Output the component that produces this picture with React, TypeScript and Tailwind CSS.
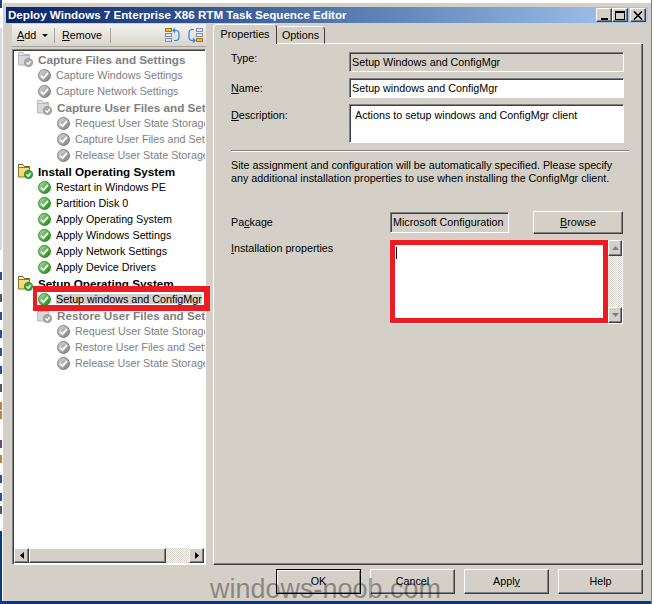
import React from 'react';

const raised = 'border border-t-white border-l-white border-r-[#404040] border-b-[#404040] shadow-[inset_-1px_-1px_0_#808080]';
const sunken = 'border border-t-[#808080] border-l-[#808080] border-r-white border-b-white shadow-[inset_1px_1px_0_#404040]';
const dither = 'bg-[repeating-conic-gradient(#ffffff_0_25%,#d4d0c8_0_50%)] bg-[length:2px_2px]';

const CheckIcon = ({on}: {on: boolean}) => (
    <svg width="13" height="13" viewBox="0 0 13 13" className="shrink-0">
        <defs>
            <linearGradient id={on ? 'check-on' : 'check-off'} x1="0" y1="0" x2="1" y2="1">
                <stop offset="0" stopColor={on ? '#b8e8a8' : '#e0e0e0'}/>
                <stop offset="0.55" stopColor={on ? '#4cb040' : '#a8a8a8'}/>
                <stop offset="1" stopColor={on ? '#1f7a28' : '#787878'}/>
            </linearGradient>
        </defs>
        <circle cx="6.5" cy="6.5" r="6" fill={`url(#${on ? 'check-on' : 'check-off'})`} stroke={on ? '#3a8a3a' : '#808080'} strokeWidth="1"/>
        <path d="M3 6.6 L5.5 9.2 L10 3.8" fill="none" stroke="#ffffff" strokeWidth="1.8"/>
    </svg>
);

const GroupIcon = ({on}: {on: boolean}) => (
    <svg width="15" height="15" viewBox="0 0 15 15" className="shrink-0">
        <path d="M0.5 13 V0.5 H5 L6.5 2.5 H11.5 V6" fill={on ? '#fff8d8' : '#e4e4e4'} stroke={on ? '#6a5a20' : '#b8b8b8'}/>
        <path d="M0.5 13 V3.5 H11.5 V13 Z" fill={on ? '#f3dc78' : '#d8d8d8'} stroke={on ? '#8a7a30' : '#b8b8b8'}/>
        <circle cx="10.5" cy="10.5" r="4.2" fill={on ? '#3fa535' : '#a8a8a8'} stroke={on ? '#1f7a28' : '#909090'} strokeWidth="0.7"/>
        <path d="M8.5 10.5 L10.2 12.2 L12.7 9" fill="none" stroke="#ffffff" strokeWidth="1.3"/>
    </svg>
);

const MoveIcon = ({flip}: {flip?: boolean}) => (
    <svg width="15" height="15" viewBox="0 0 15 15" className={flip ? 'shrink-0 -scale-x-100' : 'shrink-0'}>
        <rect x="0.5" y="0.5" width="6" height="3" fill={flip ? '#dfe6f2' : '#f5b52e'} stroke={flip ? '#7f8fa8' : '#a07a20'}/>
        <rect x="0.5" y="5.5" width="6" height="3" fill="#dfe6f2" stroke="#7f8fa8"/>
        <rect x="0.5" y="10.5" width="6" height="3" fill={flip ? '#f5b52e' : '#dfe6f2'} stroke={flip ? '#a07a20' : '#7f8fa8'}/>
        {flip ? (
            <path d="M9 1.5 H11 Q14 1.5 14 5 V9 Q14 12.5 11 12.5 H8 M10 10.5 L8 12.5 L10 14.5" fill="none" stroke="#2f7fe0" strokeWidth="1.2"/>
        ) : (
            <path d="M8 2.5 H11 Q14 2.5 14 6 V9 Q14 12.5 11 12.5 H9 M10 0.5 L8 2.5 L10 4.5" fill="none" stroke="#2f7fe0" strokeWidth="1.2"/>
        )}
    </svg>
);

const CapButton = ({children}: {children: React.ReactNode}) => (
    <div className={`flex h-[14px] w-4 items-center justify-center bg-[#d4d0c8] ${raised}`}>{children}</div>
);

const DialogButton = ({label, u, def}: {label: string; u?: boolean; def?: boolean}) => (
    <div className={`flex h-[25px] w-[85px] items-center justify-center bg-[#d4d0c8] ${def ? 'border border-black shadow-[inset_1px_1px_0_#ffffff,inset_-1px_-1px_0_#808080]' : raised}`}>
        {u ? <span>Appl<span className="underline">y</span></span> : label}
    </div>
);

type Row = {label: string; pl: string; group?: boolean; on?: boolean; selected?: boolean};

const rows: Row[] = [
    {label: 'Capture Files and Settings', pl: 'pl-1', group: true},
    {label: 'Capture Windows Settings', pl: 'pl-6'},
    {label: 'Capture Network Settings', pl: 'pl-6'},
    {label: 'Capture User Files and Settings', pl: 'pl-[23px]', group: true},
    {label: 'Request User State Storage', pl: 'pl-[43px]'},
    {label: 'Capture User Files and Settings', pl: 'pl-[43px]'},
    {label: 'Release User State Storage', pl: 'pl-[43px]'},
    {label: 'Install Operating System', pl: 'pl-1', group: true, on: true},
    {label: 'Restart in Windows PE', pl: 'pl-6', on: true},
    {label: 'Partition Disk 0', pl: 'pl-6', on: true},
    {label: 'Apply Operating System', pl: 'pl-6', on: true},
    {label: 'Apply Windows Settings', pl: 'pl-6', on: true},
    {label: 'Apply Network Settings', pl: 'pl-6', on: true},
    {label: 'Apply Device Drivers', pl: 'pl-6', on: true},
    {label: 'Setup Operating System', pl: 'pl-1', group: true, on: true},
    {label: 'Setup windows and ConfigMgr', pl: 'pl-6', on: true, selected: true},
    {label: 'Restore User Files and Settings', pl: 'pl-[23px]', group: true},
    {label: 'Request User State Storage', pl: 'pl-[43px]'},
    {label: 'Restore User Files and Settings', pl: 'pl-[43px]'},
    {label: 'Release User State Storage', pl: 'pl-[43px]'},
];

const TreeRow = ({row}: {row: Row}) => (
    <div className={`flex h-4 items-center gap-[5px] whitespace-nowrap ${row.pl}`}>
        {row.group ? <GroupIcon on={!!row.on}/> : <CheckIcon on={!!row.on}/>}
        <span className={`${row.group ? 'pt-px text-[11.7px] font-bold' : ''} ${row.on ? 'text-black' : 'text-[#808080]'} ${row.selected ? 'bg-[#d4d0c8]' : ''}`}>{row.label}</span>
    </div>
);

// bits of text of whatever is behind the window: [gap above, colour]
const scraps: [string, string][] = [
    ['h-[22px]', 'bg-[#2a4fa0]'],
    ['h-[14px]', 'bg-[#555555]'],
    ['h-[10px]', 'bg-[#2a4fa0]'],
    ['h-[10px]', 'bg-[#2a4fa0]'],
    ['h-[10px]', 'bg-[#2a4fa0]'],
    ['h-[10px]', 'bg-[#2a4fa0]'],
    ['h-[10px]', 'bg-[#555555]'],
    ['h-[10px]', 'bg-[#c08040]'],
    ['h-[1px]', 'bg-[#c08040]'],
    ['h-[21px]', 'bg-[#6a4a80]'],
    ['h-[7px]', 'bg-[#c08040]'],
    ['h-[12px]', 'bg-[#2a4fa0]'],
    ['h-[10px]', 'bg-[#2a4fa0]'],
    ['h-[5px]', 'bg-[#555555]'],
];

const App = () => {
    return (
        <div className="relative flex h-[604px] w-[654px] overflow-hidden bg-white font-['Liberation_Sans',sans-serif] text-[10.75px] leading-none text-black">
            {/* scraps of the desktop behind the window */}
            <div className="flex w-[2px] shrink-0 flex-col bg-white">
                <div className="h-[8px] shrink-0 bg-[#1e3f7a]"/>
                <div className="h-[20px] shrink-0 bg-white"/>
                <div className="h-[222px] shrink-0 bg-[#d8d8d8]"/>
                {scraps.map(([gap, color], index) => (
                    <React.Fragment key={index}>
                        <div className={`shrink-0 ${gap}`}/>
                        <div className={`h-2 shrink-0 ${color}`}/>
                    </React.Fragment>
                ))}
                <div className="min-h-0 flex-1"/>
                <div className="h-[73px] shrink-0 bg-[#0a3a80]"/>
            </div>
            <div className="flex w-[649px] shrink-0 flex-col">
                <div className="h-[3px] shrink-0 bg-white"/>
                <div className="flex min-h-0 flex-1 flex-col border-l border-white bg-[#d4d0c8] pl-[3px] pr-[3px] pt-1">
                    {/* title bar */}
                    <div className="flex h-4 shrink-0 items-center bg-gradient-to-r from-[#0a246a] to-[#a6caf0] pl-0.5 pr-[2px] ">
                        <span className="flex-1 text-[11.6px] font-bold text-white">Deploy Windows 7 Enterprise X86 RTM Task Sequence Editor</span>
                        <CapButton><div className="mt-[7px] h-[2px] w-[7px] bg-black"/></CapButton>
                        <CapButton><div className="h-[9px] w-[10px] border border-t-2 border-black"/></CapButton>
                        <div className="w-0.5"/>
                        <CapButton>
                            <svg width="10" height="9" viewBox="0 0 10 9"><path d="M1 0.5 L9 8.5 M9 0.5 L1 8.5" stroke="#000" strokeWidth="1.6"/></svg>
                        </CapButton>
                    </div>
                    <div className="flex min-h-0 flex-1 flex-col pl-1.5 pr-[5px]">
                        <div className="flex h-[542px] shrink-0 gap-[7px] pt-px">
                            {/* left side */}
                            <div className="flex w-[194px] shrink-0 flex-col">
                                <div className="flex h-[23px] shrink-0 items-center border-b border-[#a8a49c] bg-gradient-to-b from-[#f4f3ef] to-[#d8d5cd] pl-[5px]">
                                    <span className="w-[20px]"><span className="underline">A</span>dd</span>
                                    <svg width="6" height="3" viewBox="0 0 6 3" className="ml-[5px]"><path d="M0 0 H6 L3 3 Z" fill="#000"/></svg>
                                    <div className="ml-[6px] h-[15px] w-px bg-[#a8a49c]"/>
                                    <span className="ml-[7px] w-[39px]"><span className="underline">R</span>emove</span>
                                    <div className="ml-[9px] h-[15px] w-px bg-[#a8a49c]"/>
                                    <div className="ml-[54px] flex gap-2">
                                        <MoveIcon/>
                                        <MoveIcon flip/>
                                    </div>
                                </div>
                                <div className={`relative mt-[2px] flex min-h-0 flex-1 flex-col bg-white ${sunken}`}>
                                    <div className="min-h-0 flex-1 overflow-hidden pl-px pt-[1px]">
                                        {rows.map((row, index) => <TreeRow key={index} row={row}/>)}
                                    </div>
                                    <div className="mb-px ml-px flex h-[15px] w-[190px] shrink-0">
                                        <div className={`flex w-[15px] items-center justify-center bg-[#d4d0c8] ${raised}`}>
                                            <svg width="4" height="7" viewBox="0 0 4 7"><path d="M4 0 V7 L0 3.5 Z" fill="#000"/></svg>
                                        </div>
                                        <div className={`w-[137px] bg-[#d4d0c8] ${raised}`}/>
                                        <div className={`flex-1 ${dither}`}/>
                                        <div className={`flex w-[15px] items-center justify-center bg-[#d4d0c8] ${raised}`}>
                                            <svg width="4" height="7" viewBox="0 0 4 7"><path d="M0 0 V7 L4 3.5 Z" fill="#000"/></svg>
                                        </div>
                                    </div>
                                    {/* red marker drawn over the selected step */}
                                    <div className="absolute left-5 top-[236px] z-10 h-[25px] w-[177px] border-y-[6px] border-l-[4px] border-r-[6px] border-[#ed1c24]"/>
                                </div>
                            </div>
                            {/* right side */}
                            <div className="flex min-w-0 flex-1 flex-col">
                                <div className="flex h-5 shrink-0 items-end pl-0">
                                    <div className="flex h-5 w-[64px] items-center justify-center rounded-t-sm border-l border-r border-t border-l-white border-t-white border-r-[#404040] bg-[#d4d0c8]">Properties</div>
                                    <div className="flex h-[18px] w-[48px] items-center justify-center rounded-t-sm border-b border-r border-t border-b-white border-t-white border-r-[#404040] bg-[#d4d0c8]">Options</div>
                                    <div className="h-px flex-1 bg-white"/>
                                </div>
                                <div className="flex min-h-0 flex-1 flex-col border-b border-r border-l border-b-[#404040] border-r-[#404040] border-l-white pl-[17px] pr-[18px] pt-2 shadow-[inset_-1px_-1px_0_#808080]">
                                    <div className="flex h-5 items-start">
                                        <div className="w-[118px] pt-px">Type:</div>
                                        <div className={`flex h-5 w-[275px] items-center pl-0.5 ${sunken}`}>Setup Windows and ConfigMgr</div>
                                    </div>
                                    <div className="mt-1.5 flex h-5 items-center">
                                        <div className="w-[118px]"><span className="underline">N</span>ame:</div>
                                        <div className={`flex h-5 w-[275px] items-center bg-white pl-0.5 ${sunken}`}>Setup windows and ConfigMgr</div>
                                    </div>
                                    <div className="mt-1.5 flex h-[39px] items-start">
                                        <div className="w-[118px] pt-1.5"><span className="underline">D</span>escription:</div>
                                        <div className={`h-[39px] w-[275px] bg-white pl-[5px] pt-[5px] ${sunken}`}>Actions to setup windows and ConfigMgr client</div>
                                    </div>
                                    <div className="-mr-0.5 mt-[7px] h-[2px] w-[398px] border-t border-b border-t-[#808080] border-b-white"/>
                                    <div className="mt-[7px] leading-[13px]">
                                        Site assignment and configuration will be automatically specified. Please specify<br/>
                                        any additional installation properties to use when installing the ConfigMgr client.
                                    </div>
                                    <div className="mt-[26px] flex h-[23px] items-center">
                                        <div className="w-[159px]">Pa<span className="underline">c</span>kage</div>
                                        <div className={`flex h-[21px] w-[119px] items-center overflow-hidden whitespace-nowrap pl-0.5 ${sunken}`}>Microsoft Configuration</div>
                                        <div className={`ml-6 flex h-[23px] w-[90px] items-center justify-center bg-[#d4d0c8] ${raised}`}><span><span className="underline">B</span>rowse</span></div>
                                    </div>
                                    <div className="mt-1.5 flex items-start">
                                        <div className="w-[159px] pt-[3px]"><span className="underline">I</span>nstallation properties</div>
                                        <div className="flex h-[84px] w-[233px] border-b border-r border-white">
                                            <div className="relative flex-1 border-[5px] border-[#ed1c24] bg-white">
                                                <div className="ml-px mt-0.5 h-3 w-px bg-black"/>
                                            </div>
                                            <div className="flex w-[14px] flex-col">
                                                <div className={`flex h-4 items-center justify-center bg-[#d4d0c8] ${raised}`}>
                                                    <svg width="7" height="4" viewBox="0 0 7 4"><path d="M0 4 H7 L3.5 0 Z" fill="#808080"/></svg>
                                                </div>
                                                <div className={`flex-1 ${dither}`}/>
                                                <div className={`flex h-4 items-center justify-center bg-[#d4d0c8] ${raised}`}>
                                                    <svg width="7" height="4" viewBox="0 0 7 4"><path d="M0 0 H7 L3.5 4 Z" fill="#808080"/></svg>
                                                </div>
                                            </div>
                                        </div>
                                    </div>
                                </div>
                            </div>
                        </div>
                        <div className="mt-1 flex justify-end gap-[9px] pr-0">
                            <DialogButton label="OK" def/>
                            <DialogButton label="Cancel"/>
                            <DialogButton label="Apply" u/>
                            <DialogButton label="Help"/>
                        </div>
                    </div>
                </div>
                <div className="h-[3px] shrink-0 bg-[#0a3a80]"/>
            </div>
            <div className="flex-1 border-l border-[#808080] bg-white"/>
            {/* site watermark */}
            <div className="absolute left-[210px] top-[574px] z-20 text-[27px] leading-[30px] text-black opacity-35">windows-noob.com</div>
        </div>
    );
};

export default App;
